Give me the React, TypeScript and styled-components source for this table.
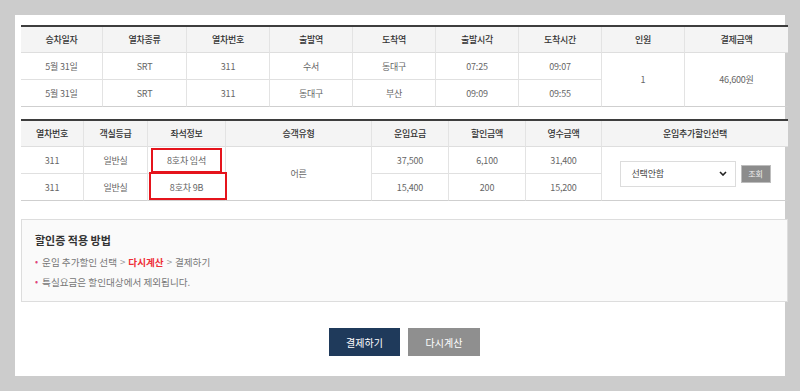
import React from "react";
import styled, { createGlobalStyle } from "styled-components";

const GlobalStyle = createGlobalStyle`
  html, body { margin: 0; padding: 0; background: #cccccc; }
  body { font-family: "Noto Sans CJK KR", "Noto Sans", sans-serif; }
  * { box-sizing: border-box; }
`;

const Page = styled.div`
  padding: 15px;
  width: 800px;
  height: 391px;
`;

const Panel = styled.div`
  width: 770px;
  height: 361px;
  background: #ffffff;
  padding: 10px 6px 0;
  display: flex;
  flex-direction: column;
`;

const Content = styled.div`
  width: 767px;
  display: flex;
  flex-direction: column;
`;

const Grid = styled.div<{ $cols: string; $mt?: number }>`
  display: grid;
  grid-template-columns: ${(p) => p.$cols};
  grid-template-rows: 26px 27px 27px;
  border-top: 2px solid #3d3d3d;
  margin-top: ${(p) => p.$mt ?? 0}px;
`;

const Head = styled.div<{ $last?: boolean }>`
  background: #f4f4f4;
  border-bottom: 1px solid #dedede;
  border-right: ${(p) => (p.$last ? "none" : "1px solid #e3e3e3")};
  display: flex;
  align-items: center;
  justify-content: center;
  font-size: 9px;
  color: #333;
  font-weight: 500;
  letter-spacing: -0.3px;
`;

const Cell = styled.div<{ $last?: boolean; $span?: boolean; $bottom?: boolean }>`
  position: relative;
  border-bottom: 1px solid ${(p) => (p.$bottom ? "#cfcfcf" : "#e0e0e0")};
  border-right: ${(p) => (p.$last ? "none" : "1px solid #e3e3e3")};
  grid-row: ${(p) => (p.$span ? "span 2" : "auto")};
  display: flex;
  align-items: center;
  justify-content: center;
  gap: 3px;
  font-size: 9px;
  color: #666;
  letter-spacing: -0.2px;
`;

const Highlight = styled.div<{ $l: number; $t: number; $w: number; $h: number }>`
  position: absolute;
  left: ${(p) => p.$l}px;
  top: ${(p) => p.$t}px;
  width: ${(p) => p.$w}px;
  height: ${(p) => p.$h}px;
  border: 2px solid #e5141c;
  pointer-events: none;
`;

const SelectBox = styled.div`
  width: 116px;
  height: 26px;
  border: 1px solid #dcdcdc;
  background: #fff;
  display: flex;
  align-items: center;
  justify-content: space-between;
  padding: 0 8px 0 11px;
  font-size: 9px;
  color: #444;
  margin-right: 2px;
`;

const SmallButton = styled.div`
  width: 30px;
  height: 18px;
  background: #8c8c8c;
  color: #f2f2f2;
  font-size: 8px;
  display: flex;
  align-items: center;
  justify-content: center;
  border: 1px solid #bdbdbd;
`;

const InfoBox = styled.div`
  margin-top: 18px;
  height: 83px;
  border: 1px solid #dddddd;
  background: #fafafa;
  padding: 12px 13px 0;
  display: flex;
  flex-direction: column;
`;

const InfoTitle = styled.div`
  font-size: 11px;
  font-weight: 700;
  color: #333;
  line-height: 16px;
  margin-bottom: 4px;
`;

const InfoLine = styled.div`
  font-size: 9.6px;
  color: #777;
  line-height: 20px;
  display: flex;
  align-items: center;
  gap: 3px;
`;

const Bullet = styled.span`
  color: #e0457b;
  font-size: 9px;
  margin-right: 1px;
`;

const Accent = styled.span`
  color: #ee2e37;
  font-weight: 700;
`;

const Arrow = styled.span`
  color: #999;
`;

const Buttons = styled.div`
  margin-top: 26px;
  display: flex;
  justify-content: center;
  gap: 8px;
`;

const ActionButton = styled.div<{ $primary?: boolean }>`
  width: ${(p) => (p.$primary ? 71 : 72)}px;
  height: 28px;
  background: ${(p) => (p.$primary ? "#1f3a5b" : "#8f8f8f")};
  color: #fff;
  font-size: 10px;
  display: flex;
  align-items: center;
  justify-content: center;
`;

const cols1 = "82px 84px 83px 83px 83px 83px 83px 83px 103px";
const cols2 = "63px 64px 78px 146px 77px 77px 76px 186px";

const head1 = ["승차일자", "열차종류", "열차번호", "출발역", "도착역", "출발시각", "도착시간", "인원", "결제금액"];
const rows1 = [
  ["5월 31일", "SRT", "311", "수서", "동대구", "07:25", "09:07"],
  ["5월 31일", "SRT", "311", "동대구", "부산", "09:09", "09:55"],
];

const head2 = ["열차번호", "객실등급", "좌석정보", "승객유형", "운임요금", "할인금액", "영수금액", "운임추가할인선택"];

const Chevron = () => (
  <svg width="8" height="5" viewBox="0 0 8 5">
    <path d="M1 1 L4 4 L7 1" fill="none" stroke="#222" strokeWidth="1.6" />
  </svg>
);

export default function App() {
  return (
    <>
      <GlobalStyle />
      <Page>
        <Panel>
          <Content>
            <Grid $cols={cols1}>
              {head1.map((h, i) => (
                <Head key={h} $last={i === head1.length - 1}>{h}</Head>
              ))}
              {rows1[0].map((c, i) => (
                <Cell key={"a" + i}>{c}</Cell>
              ))}
              <Cell $span $bottom>1</Cell>
              <Cell $span $bottom $last>46,600원</Cell>
              {rows1[1].map((c, i) => (
                <Cell key={"b" + i} $bottom>{c}</Cell>
              ))}
            </Grid>

            <Grid $cols={cols2} $mt={12}>
              {head2.map((h, i) => (
                <Head key={h} $last={i === head2.length - 1}>{h}</Head>
              ))}
              <Cell>311</Cell>
              <Cell>일반실</Cell>
              <Cell>
                8호차 임석
                <Highlight $l={3} $t={1} $w={71} $h={25} />
              </Cell>
              <Cell $span $bottom>어른</Cell>
              <Cell>37,500</Cell>
              <Cell>6,100</Cell>
              <Cell>31,400</Cell>
              <Cell $span $bottom $last>
                <SelectBox>
                  <span>선택안함</span>
                  <Chevron />
                </SelectBox>
                <SmallButton>조회</SmallButton>
              </Cell>
              <Cell $bottom>311</Cell>
              <Cell $bottom>일반실</Cell>
              <Cell $bottom>
                8호차 9B
                <Highlight $l={1} $t={-2} $w={78} $h={28} />
              </Cell>
              <Cell $bottom>15,400</Cell>
              <Cell $bottom>200</Cell>
              <Cell $bottom>15,200</Cell>
            </Grid>

            <InfoBox>
              <InfoTitle>할인증 적용 방법</InfoTitle>
              <InfoLine>
                <Bullet>•</Bullet>
                운임 추가할인 선택 <Arrow>&gt;</Arrow> <Accent>다시계산</Accent> <Arrow>&gt;</Arrow> 결제하기
              </InfoLine>
              <InfoLine>
                <Bullet>•</Bullet>
                특실요금은 할인대상에서 제외됩니다.
              </InfoLine>
            </InfoBox>

            <Buttons>
              <ActionButton $primary>결제하기</ActionButton>
              <ActionButton>다시계산</ActionButton>
            </Buttons>
          </Content>
        </Panel>
      </Page>
    </>
  );
}
